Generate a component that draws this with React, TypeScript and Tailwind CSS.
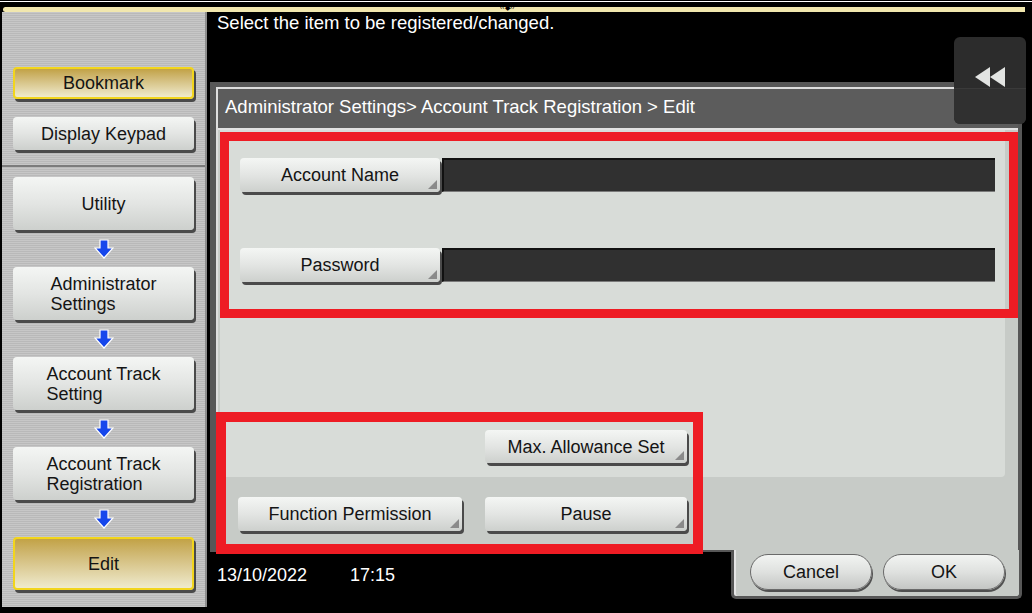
import React from 'react';

const greyBtn =
  'relative flex items-center justify-center rounded-[4px] bg-linear-to-b from-[#f4f6f4] via-[#e3e5e3] to-[#cdd0cd] shadow-[2px_3px_0_#4a4a4a] text-[18px] leading-[20px] text-[#141414]';
const yellowBtn =
  'relative flex items-center justify-center rounded-[4px] border-2 border-[#f2d51c] bg-linear-to-b from-[#c2a245] to-[#efebcd] shadow-[2px_3px_0_#4a4a4a] text-[18px] leading-[20px] text-[#141414]';

const Corner: React.FC = () => (
  <span className="absolute bottom-[3px] right-[3px] w-0 h-0 border-l-[9px] border-l-transparent border-b-[9px] border-b-[#8a8a8a]" />
);

const DownArrow: React.FC = () => (
  <svg width="20" height="20" viewBox="0 0 20 20">
    <path d="M6 1 H14 V9 H19 L10 19 L1 9 H6 Z" fill="#1546ec" stroke="#ffffff" strokeWidth="1.2" />
  </svg>
);

const steps = [
  ['Utility'],
  ['Administrator', 'Settings'],
  ['Account Track', 'Setting'],
  ['Account Track', 'Registration'],
];

const Sidebar: React.FC = () => (
  <div className="ml-[2px] w-[205px] h-[595px] flex flex-col border-r-2 border-[#8e8e8e] bg-[repeating-linear-gradient(180deg,#c7c7c7_0px,#c7c7c7_1px,#b9b9b9_1px,#b9b9b9_2px)]">
    <div className="h-[153px] pt-[55px] pl-[11px]">
      <div className={`${yellowBtn} w-[181px] h-[32px]`}>Bookmark</div>
      <div className={`${greyBtn} w-[181px] h-[33px] mt-[18px]`}>Display Keypad</div>
    </div>
    <div className="border-t-2 border-[#7c7c7c] pt-[10px] pl-[11px] flex flex-col">
      {steps.map((lines, i) => (
        <React.Fragment key={i}>
          <div className={`${greyBtn} w-[181px] h-[53px]`}>
            <span className="text-left">
              {lines.map((l) => (
                <span key={l} className="block">
                  {l}
                </span>
              ))}
            </span>
          </div>
          <div className="w-[181px] h-[37px] flex items-center justify-center">
            <DownArrow />
          </div>
        </React.Fragment>
      ))}
      <div className={`${yellowBtn} w-[181px] h-[53px]`}>Edit</div>
    </div>
  </div>
);

const Dialog: React.FC = () => (
  <div className="relative ml-[3px] w-[812px] h-[468px] bg-[#575757] pt-[5px] pl-[6px] pr-[4px]">
    <div className="h-full flex flex-col border-l-2 border-t-2 border-[#dedede]">
      <div className="h-[41px] shrink-0 bg-[#5c5c5c] border-b-2 border-[#e2e2e2] flex items-center pl-[7px] pb-[3px] text-white text-[18.5px]">
        Administrator Settings&gt; Account Track Registration &gt; Edit
      </div>
      <div className="flex-1 bg-[#c7cbc7] pl-[2px] pr-[13px] flex flex-col">
        <div className="h-[347px] bg-[#d8dcd8] rounded-br-[4px] pt-[28px] pl-[20px] pr-[10px] flex flex-col">
          <div className="flex gap-[2px]">
            <div className={`${greyBtn} w-[200px] h-[34px]`}>
              Account Name
              <Corner />
            </div>
            <div className="flex-1 h-[34px] bg-[#303030] border-t-2 border-l-2 border-[#111] border-b border-b-[#7a7a7a]" />
          </div>
          <div className="flex gap-[2px] mt-[56px]">
            <div className={`${greyBtn} w-[200px] h-[34px]`}>
              Password
              <Corner />
            </div>
            <div className="flex-1 h-[34px] bg-[#303030] border-t-2 border-l-2 border-[#111] border-b border-b-[#7a7a7a]" />
          </div>
          <div className={`${greyBtn} w-[202px] h-[33px] mt-[148px] ml-[245px]`}>
            Max. Allowance Set
            <Corner />
          </div>
        </div>
        <div className="flex pt-[20px] pl-[18px] gap-[23px]">
          <div className={`${greyBtn} w-[224px] h-[34px]`}>
            Function Permission
            <Corner />
          </div>
          <div className={`${greyBtn} w-[202px] h-[34px]`}>
            Pause
            <Corner />
          </div>
        </div>
      </div>
    </div>
    {/* annotation boxes */}
    <div className="absolute left-[10px] top-[50px] w-[798px] h-[186px] border-[9px] border-[#ee1c24]" />
    <div className="absolute left-[6px] top-[330px] w-[487px] h-[142px] border-[10px] border-[#ee1c24]" />
  </div>
);

const pill =
  'w-[122px] h-[36px] rounded-full border border-[#6a6a6a] bg-linear-to-b from-[#f2f4f2] via-[#dfe1df] to-[#c4c6c4] shadow-[1px_2px_0_#505050] flex items-center justify-center text-[18px] text-[#141414]';

const Main: React.FC = () => (
  <div className="flex-1 flex flex-col">
    <div className="h-[70px] pl-[10px] text-white text-[18.5px] leading-[22px]">
      Select the item to be registered/changed.
    </div>
    <Dialog />
    <div className="flex flex-1 ml-[3px] mr-[10px]">
      <div className="flex-1 border-t-2 border-[#575757] pl-[7px] pt-[12px] flex text-white text-[18px] leading-[22px]">
        <span className="w-[133px]">13/10/2022</span>
        <span>17:15</span>
      </div>
      <div className="w-[291px] h-[49px] bg-[#c7cbc7] border-x-[3px] border-b-[3px] border-[#575757] rounded-b-[5px] shadow-[inset_2px_0_0_#e6e6e6] flex pt-[4px] pl-[16px] gap-[11px]">
        <div className={pill}>Cancel</div>
        <div className={pill}>OK</div>
      </div>
    </div>
  </div>
);

const BackButton: React.FC = () => (
  <div className="absolute left-[954px] top-[37px] w-[72px] h-[87px] rounded-[6px] bg-[#2c2c2c] flex flex-col">
    <div className="h-[51px] flex items-end justify-center pb-[1px]">
      <svg width="30" height="20" viewBox="0 0 30 20">
        <polygon points="15,0 15,20 0,10" fill="#e2e4e2" />
        <polygon points="30,0 30,20 15,10" fill="#e2e4e2" />
      </svg>
    </div>
    <div className="flex-1 border-t border-[#3a3a3a] bg-[#303030] rounded-b-[6px]" />
  </div>
);

export default function App() {
  return (
    <div className="relative w-[1032px] h-[613px] bg-black overflow-hidden flex flex-col font-['Liberation_Sans',Arial,sans-serif]">
      <div className="h-[12px] shrink-0 flex flex-col">
        <div className="mt-[1px] h-[1px] bg-white" />
        <div className="relative mt-[5px] ml-[3px] mr-[7px] h-[5px] rounded-l-[3px] bg-[#f1e7ae]">
          <span className="absolute left-[497px] -top-[3px] text-[7px] leading-[8px] text-black">‹‹◆››</span>
        </div>
      </div>
      <div className="flex flex-1 min-h-0">
        <Sidebar />
        <Main />
      </div>
      <BackButton />
    </div>
  );
}
